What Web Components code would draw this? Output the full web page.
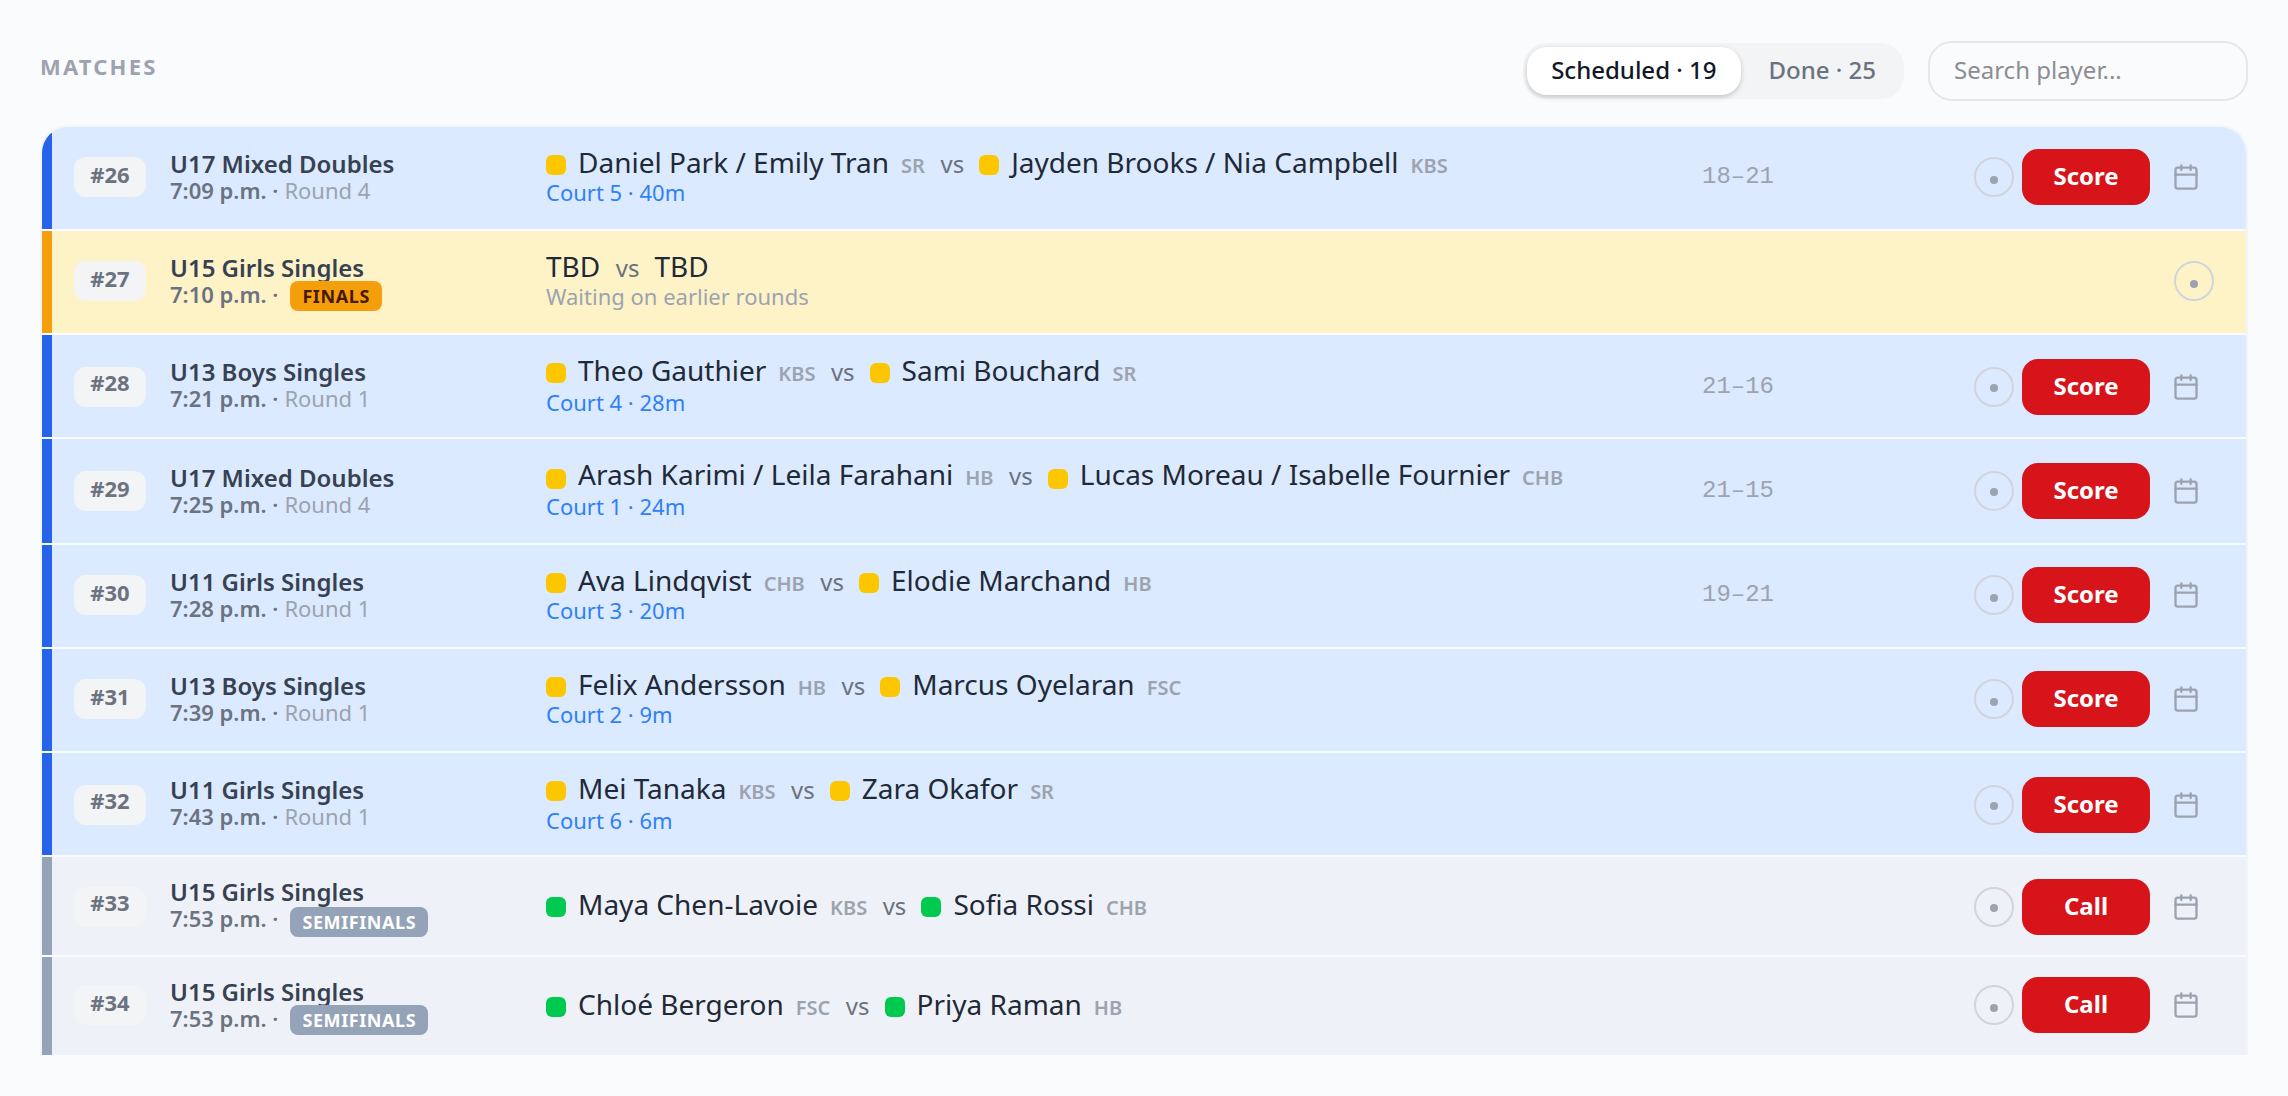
<!DOCTYPE html>
<html lang="en">
<head>
<meta charset="UTF-8">
<title>Matches</title>
<style>
    body {
        margin: 0;
        height: 1096px;
        overflow: hidden;
        background: #fafbfd;
        font-family: "Noto Sans", sans-serif;
    }
</style>
</head>
<body>
<match-board></match-board>

<script>
// y: row height, number pill, number line, info, name, chip, note, score, actions, dot, badge
const MATCHES = [
    { no: 26, event: 'U17 Mixed Doubles', time: '7:09 p.m.', round: 'Round 4', state: 'live',
      a: ['Daniel Park / Emily Tran', 'SR'], b: ['Jayden Brooks / Nia Campbell', 'KBS'],
      note: 'Court 5 · 40m', score: '18–21', action: 'Score', y: [102, 30, 35, 24, 19, 28, 48, 37, 22, 3] },
    { no: 27, event: 'U15 Girls Singles', time: '7:10 p.m.', badge: 'FINALS', state: 'final',
      a: ['TBD'], b: ['TBD'],
      note: 'Waiting on earlier rounds', y: [102, 30, 35, 24, 19, 28, 48, 37, 22, 3, 50] },
    { no: 28, event: 'U13 Boys Singles', time: '7:21 p.m.', round: 'Round 1', state: 'live',
      a: ['Theo Gauthier', 'KBS'], b: ['Sami Bouchard', 'SR'],
      note: 'Court 4 · 28m', score: '21–16', action: 'Score', y: [102, 32, 31, 24, 19, 28, 50, 39, 24, 1] },
    { no: 29, event: 'U17 Mixed Doubles', time: '7:25 p.m.', round: 'Round 4', state: 'live',
      a: ['Arash Karimi / Leila Farahani', 'HB'], b: ['Lucas Moreau / Isabelle Fournier', 'CHB'],
      note: 'Court 1 · 24m', score: '21–15', action: 'Score', y: [104, 32, 35, 26, 19, 30, 50, 39, 24, 1] },
    { no: 30, event: 'U11 Girls Singles', time: '7:28 p.m.', round: 'Round 1', state: 'live',
      a: ['Ava Lindqvist', 'CHB'], b: ['Elodie Marchand', 'HB'],
      note: 'Court 3 · 20m', score: '19–21', action: 'Score', y: [102, 30, 35, 24, 19, 28, 48, 37, 22, 3] },
    { no: 31, event: 'U13 Boys Singles', time: '7:39 p.m.', round: 'Round 1', state: 'live',
      a: ['Felix Andersson', 'HB'], b: ['Marcus Oyelaran', 'FSC'],
      note: 'Court 2 · 9m', action: 'Score', y: [102, 30, 35, 24, 19, 28, 48, 37, 22, 3] },
    { no: 32, event: 'U11 Girls Singles', time: '7:43 p.m.', round: 'Round 1', state: 'live',
      a: ['Mei Tanaka', 'KBS'], b: ['Zara Okafor', 'SR'],
      note: 'Court 6 · 6m', action: 'Score', y: [102, 32, 31, 24, 19, 28, 50, 37, 24, 1] },
    { no: 33, event: 'U15 Girls Singles', time: '7:53 p.m.', badge: 'SEMIFINALS', state: 'semi',
      a: ['Maya Chen-Lavoie', 'KBS'], b: ['Sofia Rossi', 'CHB'],
      action: 'Call', y: [98, 30, 31, 22, 31, 40, 48, 37, 22, 1, 50] },
    { no: 34, event: 'U15 Girls Singles', time: '7:53 p.m.', badge: 'SEMIFINALS', state: 'semi',
      a: ['Chloé Bergeron', 'FSC'], b: ['Priya Raman', 'HB'],
      action: 'Call', y: [98, 28, 35, 22, 31, 40, 48, 37, 20, 3, 48] }
];

class SegmentTabs extends HTMLElement {
    connectedCallback() {
        this.attachShadow({ mode: 'open' });
        this.shadowRoot.innerHTML = `
            <style>
                :host {
                    display: flex;
                    gap: 4px;
                    box-sizing: border-box;
                    height: 56px;
                    padding: 4px;
                    border-radius: 24px;
                    background: #f3f4f6;
                }
                ::slotted(span) {
                    box-sizing: border-box;
                    height: 48px;
                    padding: 0 24px;
                    border-radius: 20px;
                    font-size: 24px;
                    line-height: 45px;
                    font-weight: 500;
                    color: #6b7280;
                    white-space: nowrap;
                }
                ::slotted(.active) {
                    background: #fff;
                    color: #111827;
                    box-shadow: 0 2px 6px rgba(0,0,0,.1), 0 2px 4px rgba(0,0,0,.1);
                }
            </style>
            <slot></slot>
        `;
    }
}

class MatchRow extends HTMLElement {
    set match(m) {
        const [h, num, numLine, info, name, chip, note, score, act, dot, badge] = m.y;
        const player = ([who, club]) => `
            ${club ? '<i class="chip"></i>' : ''}
            <span class="name">${who}</span>
            ${club ? `<span class="club">${club}</span>` : ''}`;

        this.attachShadow({ mode: 'open' });
        this.shadowRoot.innerHTML = `
            <style>
                :host {
                    display: grid;
                    grid-template-columns: 96px 376px 1156px 1fr auto;
                    box-sizing: border-box;
                    height: ${h}px;
                    padding: 0 32px 0 22px;
                    border-left: 10px solid #2563eb;
                    background: #dbeafe;
                    overflow: hidden;
                }
                :host(.final) { background: #fef3c7; border-color: #f59e0b; }
                :host(.semi) { background: #eef2f8; border-color: #94a3b8; }

                .num {
                    width: 72px;
                    height: 40px;
                    margin-top: ${num}px;
                    border-radius: 12px;
                    background: #f3f4f6;
                    color: #6b7280;
                    font-size: 22px;
                    line-height: ${numLine}px;
                    font-weight: 700;
                    text-align: center;
                }
                .info { padding-top: ${info}px; white-space: nowrap; }
                .event {
                    height: 26px;
                    font-size: 24px;
                    line-height: 26px;
                    font-weight: 600;
                    color: #374151;
                }
                .when {
                    display: flex;
                    height: 27px;
                    font-size: 22px;
                    line-height: 27px;
                    font-weight: 600;
                    color: #6b7280;
                }
                .round { margin-left: 6px; font-weight: 400; color: #9ca3af; }
                .badge {
                    height: 30px;
                    box-sizing: border-box;
                    margin: ${(badge || 0) - info - 26}px 0 0 12px;
                    padding: 0 12px;
                    border-radius: 8px;
                    background: #f59e0b;
                    color: #451a03;
                    font-size: 18px;
                    line-height: 31px;
                    font-weight: 700;
                    letter-spacing: .6px;
                }
                :host(.semi) .badge { background: #94a3b8; color: #fff; }

                .players {
                    display: flex;
                    align-items: flex-start;
                    height: ${note}px;
                    white-space: nowrap;
                }
                .chip {
                    width: 20px;
                    height: 20px;
                    margin: ${chip}px 12px 0 0;
                    border-radius: 6px;
                    background: #fdc700;
                }
                :host(.semi) .chip { background: #00c950; }
                .name { padding-top: ${name}px; font-size: 28px; line-height: 32px; color: #1f2937; }
                .club {
                    margin-left: 12px;
                    padding-top: ${name}px;
                    font-size: 20px;
                    line-height: 39px;
                    font-weight: 600;
                    color: #9ca3af;
                }
                .vs {
                    margin: 0 15px 0 15.5px;
                    padding-top: ${name}px;
                    font-size: 24px;
                    line-height: 35px;
                    color: #6b7280;
                }
                .note { height: 30px; margin-top: 2px; font-size: 22px; line-height: 30px; color: #3080f8; }
                :host(.final) .note { color: #9ca3af; }

                .score {
                    padding-top: ${score}px;
                    font-family: "Liberation Mono", monospace;
                    font-size: 24px;
                    line-height: 26px;
                    color: #9ca3af;
                }
                .actions { display: flex; align-items: center; height: 56px; margin-top: ${act}px; }
                .ring {
                    display: flex;
                    justify-content: center;
                    box-sizing: border-box;
                    width: 40px;
                    height: 40px;
                    border: 2px solid #d1d5db;
                    border-radius: 50%;
                }
                .ring i {
                    width: 8px;
                    height: 8px;
                    margin-top: ${14 + dot}px;
                    border-radius: 50%;
                    background: #9ca3af;
                }
                button {
                    width: 128px;
                    height: 56px;
                    margin: 0 24px 0 8px;
                    padding: 0 0 2px;
                    border: 0;
                    border-radius: 16px;
                    background: #d7141a;
                    color: #fff;
                    font: 700 24px/54px "Noto Sans", sans-serif;
                }
                svg { display: block; margin: 0 14px 0 -2px; }
            </style>

            <div class="num">#${m.no}</div>
            <div class="info">
                <div class="event">${m.event}</div>
                <div class="when">
                    <span>${m.time} ·</span>
                    ${m.badge ? `<span class="badge">${m.badge}</span>` : `<span class="round">${m.round}</span>`}
                </div>
            </div>
            <div>
                <div class="players">${player(m.a)}<span class="vs">vs</span>${player(m.b)}</div>
                ${m.note ? `<div class="note">${m.note}</div>` : ''}
            </div>
            <div class="score">${m.score || ''}</div>
            <div class="actions">
                <span class="ring"><i></i></span>
                ${m.action ? `
                <button>${m.action}</button>
                <svg width="28" height="28" viewBox="0 0 24 24" fill="none" stroke="#9ca3af" stroke-width="2" stroke-linecap="round" stroke-linejoin="round">
                    <rect x="3" y="4" width="18" height="18" rx="2"/>
                    <path d="M16 2v4M8 2v4M3 10h18"/>
                </svg>` : ''}
            </div>
        `;
        this.classList.add(m.state);
    }
}

class MatchBoard extends HTMLElement {
    connectedCallback() {
        this.attachShadow({ mode: 'open' });
        this.shadowRoot.innerHTML = `
            <style>
                :host { display: block; padding: 41px 40px 0; }
                header { display: flex; align-items: center; height: 60px; }
                h2 {
                    margin: 0 auto 11px 0;
                    font-size: 22px;
                    line-height: 30px;
                    font-weight: 700;
                    letter-spacing: 2.2px;
                    color: #9ca3af;
                }
                input {
                    box-sizing: border-box;
                    width: 320px;
                    height: 60px;
                    margin-left: 24px;
                    padding: 0 24px 3px;
                    border: 2px solid #e5e7eb;
                    border-radius: 24px;
                    background: transparent;
                    font: 24px "Noto Sans", sans-serif;
                }
                input::placeholder { color: #8b8d93; opacity: 1; }
                .list {
                    display: flex;
                    flex-direction: column;
                    gap: 2px;
                    margin-top: 24px;
                    border: 2px solid #f1f4f8;
                    border-bottom: 0;
                    border-radius: 28px 28px 0 0;
                    overflow: hidden;
                }
            </style>

            <header>
                <h2>MATCHES</h2>
                <segment-tabs>
                    <span class="active">Scheduled · 19</span>
                    <span>Done · 25</span>
                </segment-tabs>
                <input type="text" placeholder="Search player...">
            </header>
            <div class="list"></div>
        `;

        const list = this.shadowRoot.querySelector('.list');
        MATCHES.forEach(m => {
            const row = document.createElement('match-row');
            row.match = m;
            list.appendChild(row);
        });
    }
}

customElements.define('segment-tabs', SegmentTabs);
customElements.define('match-row', MatchRow);
customElements.define('match-board', MatchBoard);
</script>
</body>
</html>
